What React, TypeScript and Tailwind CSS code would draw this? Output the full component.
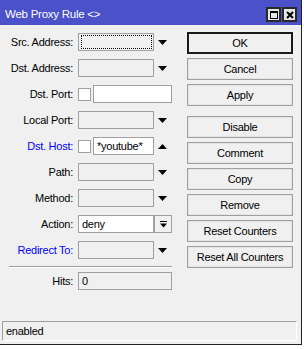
const Down = () => (
    <svg width="9" height="5" viewBox="0 0 9 5" className="ml-[4px] shrink-0">
        <polygon points="0,0 9,0 4.5,5" fill="#000" />
    </svg>
)

const Up = () => (
    <svg width="9" height="5" viewBox="0 0 9 5" className="ml-[4px] shrink-0">
        <polygon points="0,5 9,5 4.5,0" fill="#000" />
    </svg>
)

const Field = ({ w = 'w-[76px]', white = false, children }: { w?: string; white?: boolean; children?: React.ReactNode }) => (
    <div className={`${w} h-[18px] border border-[#a0a0a0] ${white ? 'bg-white' : 'bg-[#f0f0f0]'} pl-[3px] flex items-center leading-none text-black`}>
        {children}
    </div>
)

const Check = () => <div className="size-[13px] border border-[#a0a0a0] bg-white shrink-0" />

const Row = ({ label, blue = false, children }: { label: string; blue?: boolean; children?: React.ReactNode }) => (
    <div className="flex h-[26px] items-center">
        <div className={`w-[74px] text-right pr-[1px] ${blue ? 'text-[#0000ff]' : 'text-black'}`}>{label}</div>
        <div className="ml-[4px] flex items-center">{children}</div>
    </div>
)

const Btn = ({ label, main = false, className = '' }: { label: string; main?: boolean; className?: string }) => (
    <div
        className={`w-[106px] h-[22px] flex items-center justify-center text-black bg-[#f0f0f0] ${
            main ? 'border-2 border-[#1a1a1a]' : 'border border-[#a0a0a0] shadow-[inset_0_0_0_1px_#e4e4e4]'
        } ${className}`}
    >
        {label}
    </div>
)

export default function App() {
    return (
        <div className="w-[304px] h-[349px] bg-white text-[11px] tracking-[-0.25px]" style={{ fontFamily: '"Liberation Sans", Arial, sans-serif' }}>
            <div className="w-[302px] h-[345px] bg-[#f0f0f0] border-r border-b border-[#202020] flex flex-col">
                {/* title bar */}
                <div className="h-[25px] bg-[#4b51c8] flex items-center pt-[5px] pl-[5px] pr-[4px]">
                    <span className="text-white text-[11.5px]">Web Proxy Rule &lt;&gt;</span>
                    <div className="ml-auto flex gap-[1px] -mt-[1px]">
                        <div className="size-[15px] border-2 border-[#2a2a2a] bg-[#e6e6e6] flex items-center justify-center">
                            <div className="size-[8px] border border-t-2 border-[#000]" />
                        </div>
                        <div className="size-[15px] border-2 border-[#2a2a2a] bg-[#e6e6e6] flex items-center justify-center">
                            <svg width="8" height="8" viewBox="0 0 8 8">
                                <path d="M1 1 L7 7 M7 1 L1 7" stroke="#000" strokeWidth="2" />
                            </svg>
                        </div>
                    </div>
                </div>

                {/* body */}
                <div className="flex">
                    <div className="w-[176px] pt-[4px]">
                        <Row label="Src. Address:">
                            <Field>
                                <div className="w-full h-[14px] -ml-[1px] mr-[1px] border border-dotted border-black" />
                            </Field>
                            <Down />
                        </Row>
                        <Row label="Dst. Address:">
                            <Field />
                            <Down />
                        </Row>
                        <Row label="Dst. Port:">
                            <Check />
                            <div className="ml-[2px]">
                                <Field w="w-[79px]" white />
                            </div>
                        </Row>
                        <Row label="Local Port:">
                            <Field />
                            <Down />
                        </Row>
                        <Row label="Dst. Host:" blue>
                            <Check />
                            <div className="ml-[2px]">
                                <Field w="w-[61px]" white>*youtube*</Field>
                            </div>
                            <Up />
                        </Row>
                        <Row label="Path:">
                            <Field />
                            <Down />
                        </Row>
                        <Row label="Method:">
                            <Field />
                            <Down />
                        </Row>
                        <Row label="Action:">
                            <Field white>deny</Field>
                            <div className="w-[18px] h-[18px] border border-[#a0a0a0] flex items-center justify-center">
                                <svg width="7" height="7" viewBox="0 0 7 7">
                                    <rect x="0" y="0" width="7" height="1" fill="#000" />
                                    <polygon points="0,2.5 7,2.5 3.5,6.5" fill="#000" />
                                </svg>
                            </div>
                        </Row>
                        <Row label="Redirect To:" blue>
                            <Field />
                            <Down />
                        </Row>
                        <div className="ml-[9px] w-[163px] mt-[3px] border-t border-[#a0a0a0] border-b border-b-white" />
                        <Row label="Hits:">
                            <Field w="w-[94px]">0</Field>
                        </Row>
                    </div>

                    <div className="ml-[11px] pt-[7px] flex flex-col gap-[4px]">
                        <Btn label="OK" main />
                        <Btn label="Cancel" />
                        <Btn label="Apply" />
                        <Btn label="Disable" className="mt-[6px]" />
                        <Btn label="Comment" />
                        <Btn label="Copy" />
                        <Btn label="Remove" />
                        <Btn label="Reset Counters" />
                        <Btn label="Reset All Counters" />
                    </div>
                </div>

                {/* status bar */}
                <div className="mt-auto mb-[3px] ml-[2px] mr-[4px] h-[20px] border-t border-l border-[#a0a0a0] border-r border-b border-r-white border-b-white flex items-center pl-[3px] text-black">
                    enabled
                </div>
            </div>
        </div>
    )
}
